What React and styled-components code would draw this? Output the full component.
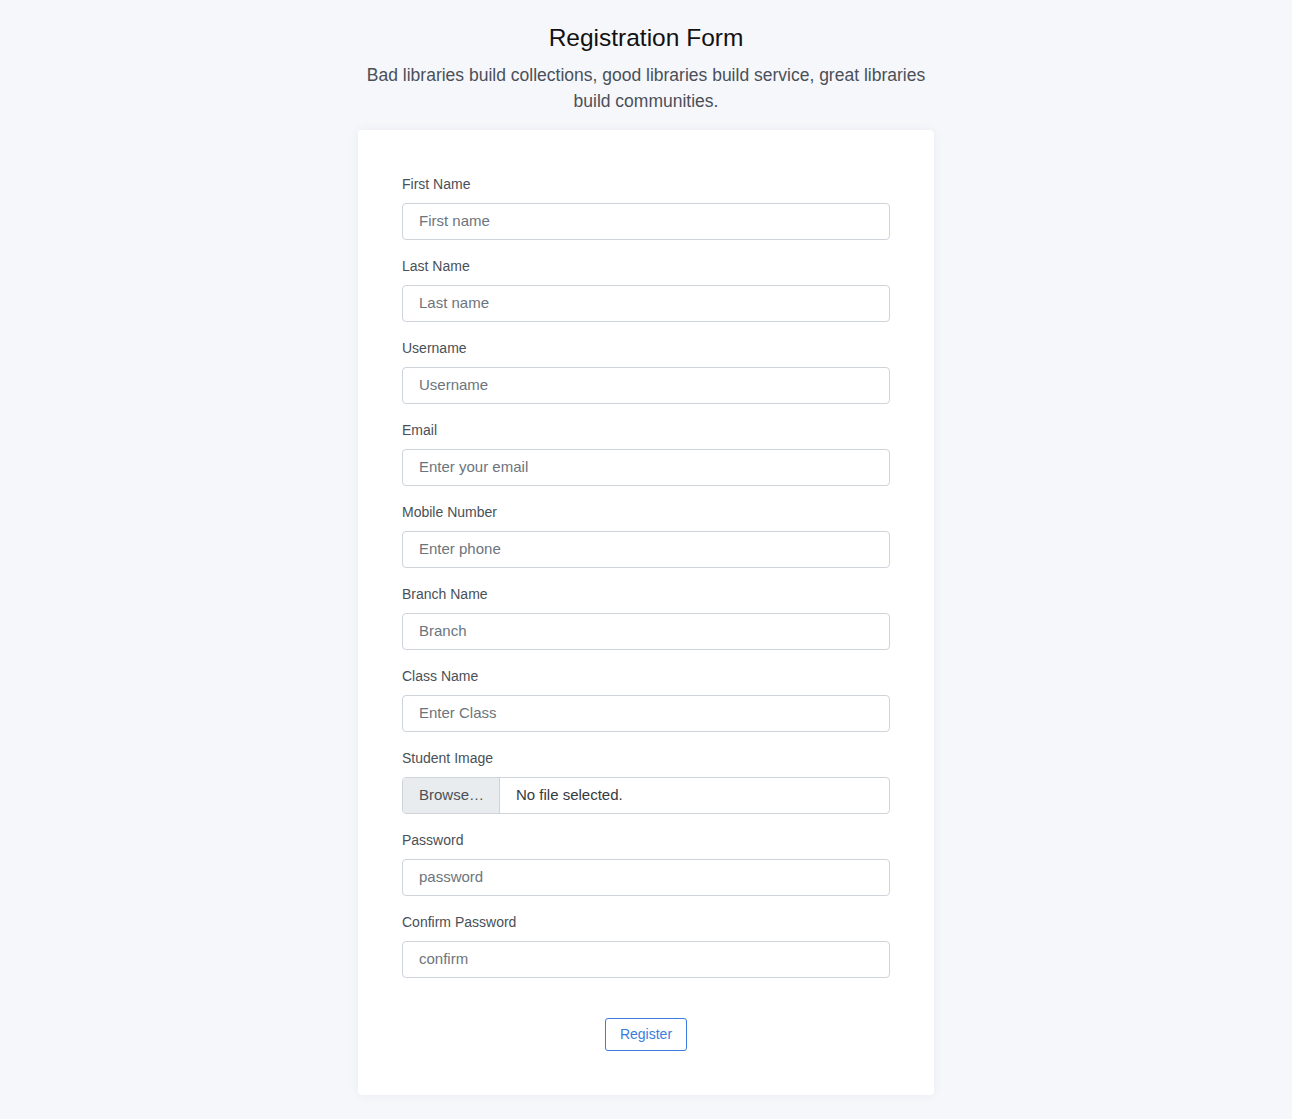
import React from 'react'
import styled, { createGlobalStyle } from 'styled-components'

const GlobalStyle = createGlobalStyle`
  body {
    margin: 0;
    background: #f6f7fb;
    font-family: 'Liberation Sans', Arial, sans-serif;
  }
`

const Page = styled.div`
  display: flex;
  flex-direction: column;
  align-items: center;
  padding: 24px 0 24px;
`

const Title = styled.h1`
  margin: 0 0 10px;
  font-size: 24.5px;
  line-height: 28px;
  font-weight: 400;
  color: #111;
`

const Subtitle = styled.p`
  margin: 0 0 16px;
  width: 576px;
  text-align: center;
  font-size: 17.5px;
  line-height: 26px;
  color: #4a5058;
`

const Card = styled.form`
  width: 576px;
  box-sizing: border-box;
  padding: 44px;
  background: #fff;
  border-radius: 4px;
  box-shadow: 0 0 12px rgba(30, 40, 90, 0.05);
  display: flex;
  flex-direction: column;
  gap: 16px;
`

const Group = styled.div`
  display: flex;
  flex-direction: column;
`

const Label = styled.label`
  font-size: 14px;
  line-height: 20px;
  margin-bottom: 9px;
  color: #495057;
`

const Input = styled.input`
  height: 37px;
  box-sizing: border-box;
  padding: 0 16px 2px;
  border: 1px solid #ced4da;
  border-radius: 4px;
  font-family: inherit;
  font-size: 15px;
  color: #495057;
  outline: none;
  &::placeholder {
    color: #6c757d;
  }
`

const FileBox = styled.label`
  display: flex;
  height: 37px;
  box-sizing: border-box;
  border: 1px solid #ced4da;
  border-radius: 4px;
  overflow: hidden;
  font-size: 15px;
  cursor: pointer;
  input {
    display: none;
  }
`

const BrowseButton = styled.span`
  display: flex;
  align-items: center;
  width: 97px;
  box-sizing: border-box;
  padding: 0 0 2px 16px;
  background: #e9ecef;
  border-right: 1px solid #ced4da;
  color: #495057;
`

const FileName = styled.span`
  display: flex;
  align-items: center;
  padding: 0 0 2px 16px;
  color: #343a40;
`

const Actions = styled.div`
  display: flex;
  justify-content: center;
  margin-top: 24px;
`

const RegisterButton = styled.button`
  height: 33px;
  padding: 0 14px 1px;
  background: #fff;
  border: 1px solid #3b7ddd;
  border-radius: 3px;
  color: #3b7ddd;
  font-family: inherit;
  font-size: 14px;
  cursor: pointer;
`

const fields = [
  { label: 'First Name', placeholder: 'First name' },
  { label: 'Last Name', placeholder: 'Last name' },
  { label: 'Username', placeholder: 'Username' },
  { label: 'Email', placeholder: 'Enter your email', type: 'email' },
  { label: 'Mobile Number', placeholder: 'Enter phone' },
  { label: 'Branch Name', placeholder: 'Branch' },
  { label: 'Class Name', placeholder: 'Enter Class' },
]

const passwords = [
  { label: 'Password', placeholder: 'password' },
  { label: 'Confirm Password', placeholder: 'confirm' },
]

const Field = ({ label, placeholder, type = 'text' }) => (
  <Group>
    <Label>{label}</Label>
    <Input type={type} placeholder={placeholder} />
  </Group>
)

const App = () => (
  <Page>
    <GlobalStyle />
    <Title>Registration Form</Title>
    <Subtitle>
      Bad libraries build collections, good libraries build service, great libraries build communities.
    </Subtitle>
    <Card onSubmit={e => e.preventDefault()}>
      {fields.map(f => (
        <Field key={f.label} {...f} />
      ))}
      <Group>
        <Label>Student Image</Label>
        <FileBox>
          <input type='file' />
          <BrowseButton>Browse…</BrowseButton>
          <FileName>No file selected.</FileName>
        </FileBox>
      </Group>
      {passwords.map(f => (
        <Field key={f.label} type='password' {...f} />
      ))}
      <Actions>
        <RegisterButton type='submit'>Register</RegisterButton>
      </Actions>
    </Card>
  </Page>
)

export default App
